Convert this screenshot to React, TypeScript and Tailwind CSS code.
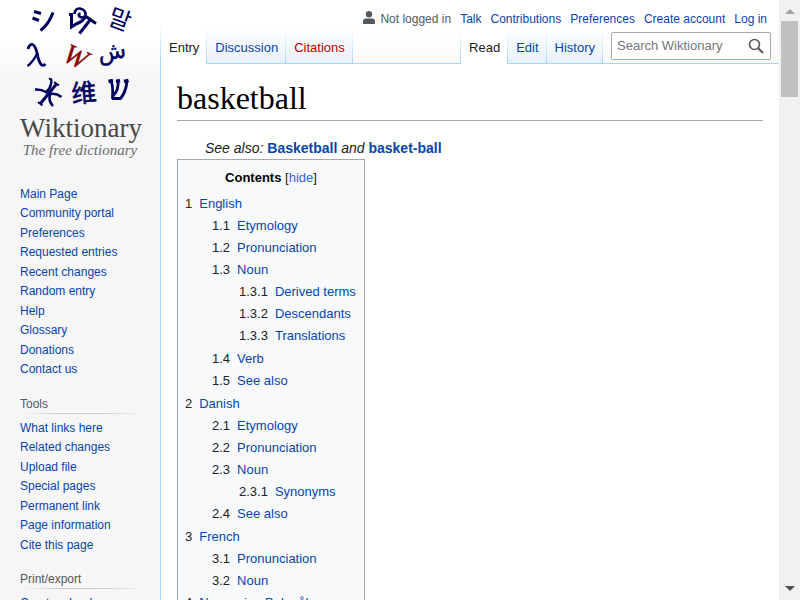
import React from "react";

type Entry = { title: string; children?: Entry[] };

const toc: Entry[] = [
  {
    title: "English",
    children: [
      { title: "Etymology" },
      { title: "Pronunciation" },
      {
        title: "Noun",
        children: [{ title: "Derived terms" }, { title: "Descendants" }, { title: "Translations" }],
      },
      { title: "Verb" },
      { title: "See also" },
    ],
  },
  {
    title: "Danish",
    children: [
      { title: "Etymology" },
      { title: "Pronunciation" },
      { title: "Noun", children: [{ title: "Synonyms" }] },
      { title: "See also" },
    ],
  },
  { title: "French", children: [{ title: "Pronunciation" }, { title: "Noun" }] },
  { title: "Norwegian Bokmål" },
];

const navigation = [
  "Main Page",
  "Community portal",
  "Preferences",
  "Requested entries",
  "Recent changes",
  "Random entry",
  "Help",
  "Glossary",
  "Donations",
  "Contact us",
];

const tools = [
  "What links here",
  "Related changes",
  "Upload file",
  "Special pages",
  "Permanent link",
  "Page information",
  "Cite this page",
];

const personal = ["Talk", "Contributions", "Preferences", "Create account", "Log in"];

function Logo() {
  return (
    <a href="#" aria-label="Wiktionary, the free dictionary" className="block w-40">
      <svg viewBox="0 0 160 162" className="block w-full">
        <g fill="none" stroke="#00005e">
          <g strokeWidth="3">
            <path d="M34 11.500 L41 13.500 M32.500 18 L39 20.500" />
            <path d="M40.500 30.500 Q49 24 53 12.500" />
            <path d="M69 14.500 H73 M71.500 14 V27 L76 24 Q84 21 85.500 16" />
            <path d="M74.500 14 Q75 8 80 8.500 Q86.500 10 85.500 16 Q82 19 79 16 Q78 14 80.500 13.500" strokeWidth="2.600" />
            <path d="M86 16.500 L96 23.500 M90 20 L79.500 33.500" />
          </g>
          <path d="M28 49 Q29.500 44 32.500 44.500 Q35.500 45.500 37.500 55 Q40.500 69 45.500 64" strokeWidth="2.800" />
          <path d="M37.500 53 Q33 62 27.500 66" strokeWidth="2.400" />
          <g strokeWidth="3">
            <path d="M56.500 84 L40.500 103.500" />
            <path d="M49 79 Q52.500 78 51 84 Q50 89 46 92 Q41 89 35 89.500" strokeWidth="2.400" />
            <path d="M46 92 L51 94 Q56 93 61.500 97 M50 94 Q48 101 53 106" strokeWidth="2.600" />
            <path d="M54 82 L59 85.500 M38 102 L42.500 105.500" strokeWidth="2" />
          </g>
          <path d="M110.500 80.500 Q113.500 84 112.500 99 M112 98.500 L120.500 98.500 Q126 92 127 81 M118 81 Q119 90 113 96" strokeWidth="2.800" />
          <path d="M108.500 81.500 L113 80.500 M116 81.500 L120 80.500 M124 81.500 L128.500 80.500" strokeWidth="3.500" />
        </g>
        <g fill="#00005e" textAnchor="middle">
          <text x="120" y="28" fontSize="24" transform="rotate(20 120 19)" className="font-['Noto_Sans_CJK_KR',sans-serif]">말</text>
          <text x="76" y="66" fontSize="28" fill="#8f0000" stroke="#8f0000" strokeWidth="0.4" transform="rotate(26 76 56)" className="font-['Liberation_Serif',serif] italic">W</text>
          <text x="112" y="59" fontSize="23" stroke="#00005e" strokeWidth="0.4" transform="rotate(-8 112 52)" className="font-['DejaVu_Sans',sans-serif]">ش</text>
          <text x="84" y="102" fontSize="25" stroke="#00005e" strokeWidth="0.6" transform="rotate(-5 84 93)" className="font-['Noto_Sans_CJK_SC',sans-serif]">维</text>
        </g>
        <g textAnchor="middle">
          <text x="81" y="137" fontSize="27" fill="#484848" className="font-['Liberation_Serif',serif]">Wiktionary</text>
          <text x="80" y="155" fontSize="15" fill="#6b6b6b" className="font-['Liberation_Serif',serif] italic">The free dictionary</text>
        </g>
      </svg>
    </a>
  );
}

function LinkList({ items }: { items: string[] }) {
  return (
    <ul>
      {items.map((item) => (
        <li key={item} className="leading-4 odd:pb-[3px] even:pb-1">
          <a href="#" className="text-[#0645ad]">{item}</a>
        </li>
      ))}
    </ul>
  );
}

function Portal({ title, items }: { title: string; items: string[] }) {
  return (
    <nav aria-label={title} className="pt-[15px]">
      <h3 className="leading-4 text-[#54595d]">{title}</h3>
      <div className="mt-px mb-1.5 h-px bg-[linear-gradient(to_right,transparent,#c8ccd1_33%,#c8ccd1_66%,transparent)]" />
      <LinkList items={items} />
    </nav>
  );
}

function Divider() {
  return <li aria-hidden="true" className="w-px bg-linear-to-b from-white to-[#a7d7f9]" />;
}

function Tab({ label, active, missing }: { label: string; active?: boolean; missing?: boolean }) {
  const look = active
    ? "bg-white text-[#202122] border-white"
    : missing
      ? "bg-linear-to-b from-white to-[#e8f2f8] text-[#ba0000] border-[#a7d7f9]"
      : "bg-linear-to-b from-white to-[#e8f2f8] text-[#0645ad] border-[#a7d7f9]";
  return (
    <>
      <li className="flex">
        <a href="#" className={"block border-b pt-[13px] pr-[7px] pl-2 leading-4 " + look}>{label}</a>
      </li>
      <Divider />
    </>
  );
}

function Toc({ items, prefix }: { items: Entry[]; prefix: string }) {
  // Longer nested lists get a pixel of air before the next heading.
  const spacing = items.length > 2 ? "ml-[27px] pb-px" : "ml-[27px]";
  return (
    <ul className={prefix ? spacing : ""}>
      {items.map((item, i) => {
        const number = prefix + (i + 1);
        return (
          <li key={number}>
            <a href="#" className="flex gap-[7px] whitespace-nowrap leading-[22px] text-[#0645ad]">
              <span className="text-[#202122]">{number}</span>
              <span>{item.title}</span>
            </a>
            {item.children && <Toc items={item.children} prefix={number + "."} />}
          </li>
        );
      })}
    </ul>
  );
}

function Header() {
  return (
    <header className="bg-linear-to-b from-white from-50% to-[#f9f9f9]">
      <div className="flex h-[27px] items-end justify-end gap-[9px] pr-3 text-xs leading-4">
        <div className="flex text-[#54595d]">
          <svg viewBox="0 0 12 13" className="mr-[5px] h-[13px] w-3" fill="#54595d" aria-hidden="true">
            <circle cx="6" cy="3.200" r="3.200" />
            <path d="M0 13 V10.500 Q0 7.500 3 7.500 H9 Q12 7.500 12 10.500 V13 Z" />
          </svg>
          <span>Not logged in</span>
        </div>
        {personal.map((item) => (
          <a key={item} href="#" className="text-[#0645ad]">{item}</a>
        ))}
      </div>
      <div className="flex h-[37px] text-[13px]">
        <ul className="flex">
          <Tab label="Entry" active />
          <Tab label="Discussion" />
          <Tab label="Citations" missing />
        </ul>
        <div className="grow border-b border-[#a7d7f9]" />
        <ul className="flex">
          <Divider />
          <Tab label="Read" active />
          <Tab label="Edit" />
          <Tab label="History" />
        </ul>
        <form className="border-b border-[#a7d7f9] px-2 pt-[5px]" onSubmit={(e) => e.preventDefault()}>
          <div className="flex h-7 w-[20vw] items-center rounded-xs border border-[#a2a9b1] bg-white">
            <input
              type="search"
              aria-label="Search Wiktionary"
              placeholder="Search Wiktionary"
              className="min-w-0 grow pl-[5px] outline-none placeholder:text-[#72777d]"
            />
            <button aria-label="Search" className="px-1.5">
              <svg viewBox="0 0 16 16" className="size-4" fill="none" stroke="#54595d" strokeWidth="1.600" aria-hidden="true">
                <circle cx="6.500" cy="6.500" r="5" />
                <path d="M10.200 10.200 L15 15" strokeWidth="2" />
              </svg>
            </button>
          </div>
        </form>
      </div>
    </header>
  );
}

function Scrollbar() {
  return (
    <div aria-hidden="true" className="flex w-[21px] shrink-0 flex-col items-center bg-[#f1f1f1]">
      <svg viewBox="0 0 10 5" className="mt-[9px] mb-[7px] h-[5px] w-2.5" fill="#a3a3a3">
        <path d="M5 0 L10 5 H0 Z" />
      </svg>
      <div className="h-[76px] w-[17px] bg-[#c1c1c1]" />
      <svg viewBox="0 0 10 5" className="mt-auto mb-[9px] h-[5px] w-2.5" fill="#505050">
        <path d="M0 0 H10 L5 5 Z" />
      </svg>
    </div>
  );
}

export default function App() {
  return (
    <div className="flex h-screen bg-white font-['Liberation_Sans',Arial,sans-serif] text-[#202122]">
      <div className="flex min-w-0 grow overflow-hidden">
        <aside className="w-40 shrink-0 overflow-hidden bg-[linear-gradient(to_bottom,#ffffff_40px,#f6f6f6_80px)]">
          <Logo />
          <div className="pt-6 pr-4 pl-5 text-xs">
            <LinkList items={navigation} />
            <Portal title="Tools" items={tools} />
            <Portal title="Print/export" items={["Create a book"]} />
          </div>
        </aside>
        <div className="w-px shrink-0 bg-[linear-gradient(to_bottom,#ffffff_24px,#a7d7f9_64px)]" />
        <div className="min-w-0 grow">
          <Header />
          <main className="px-4 pt-4">
            <h1 className="border-b border-[#a2a9b1] pb-[3px] font-['Georgia','Liberation_Serif',serif] text-[32px] leading-[37px] text-black">
              basketball
            </h1>
            <p className="mt-4 ml-7 text-sm leading-[22px] italic">
              See also:{" "}
              <a href="#" className="font-bold text-[#0645ad] not-italic">Basketball</a>
              {" and "}
              <a href="#" className="font-bold text-[#0645ad] not-italic">basket-ball</a>
            </p>
            <nav aria-label="Contents" className="inline-block min-w-[188px] border border-[#a2a9b1] bg-[#f8f9fa] p-[7px] text-[13px]">
              <div className="mb-1 text-center leading-[22px]">
                <h2 className="inline font-bold text-black">Contents</h2>{" "}
                <button className="text-[#202122]">
                  [<span className="text-[#3366cc]">hide</span>]
                </button>
              </div>
              <Toc items={toc} prefix="" />
            </nav>
          </main>
        </div>
      </div>
      <Scrollbar />
    </div>
  );
}
